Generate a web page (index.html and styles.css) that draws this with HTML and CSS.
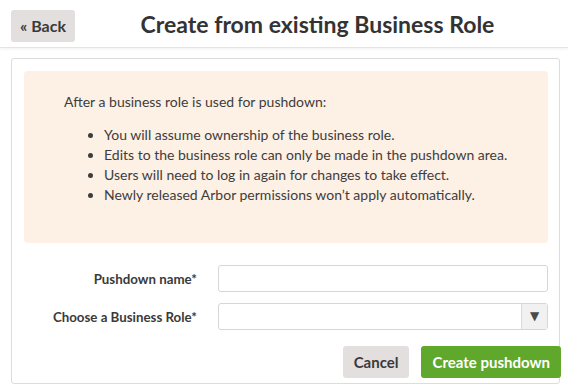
FILE: index.html
```html
<!DOCTYPE html>
<html lang="en">
<head>
  <meta charset="UTF-8">
  <meta name="viewport" content="width=device-width, initial-scale=1.0">
  <title>Create from existing Business Role</title>
  <link rel="stylesheet" href="styles.css">
</head>
<body>
  <header class="topbar">
    <button class="btn btn-back">« Back</button>
    <h1 class="title">Create from existing Business Role</h1>
  </header>

  <div class="panel">
    <div class="notice">
      <p>After a business role is used for pushdown:</p>
      <ul>
        <li>You will assume ownership of the business role.</li>
        <li>Edits to the business role can only be made in the pushdown area.</li>
        <li>Users will need to log in again for changes to take effect.</li>
        <li>Newly released Arbor permissions won’t apply automatically.</li>
      </ul>
    </div>

    <form class="form">
      <div class="row">
        <label class="label" for="name">Pushdown name*</label>
        <input class="input" id="name" type="text">
      </div>
      <div class="row">
        <label class="label" for="role">Choose a Business Role*</label>
        <div class="select" id="role">
          <span class="select-arrow">▼</span>
        </div>
      </div>
      <div class="actions">
        <button type="button" class="btn btn-cancel">Cancel</button>
        <button type="button" class="btn btn-primary">Create pushdown</button>
      </div>
    </form>
  </div>
</body>
</html>
```

FILE: styles.css
```css
body {
  font-family: Lato, "Open Sans", sans-serif;
  margin: 0;
  padding: 0;
  color: #3d3d3d;
  background: #fff;
}

.topbar {
  display: flex;
  align-items: center;
  height: 48px;
  padding: 0 8px 0 11px;
  border-bottom: 1px solid #e4e4e4;
  box-shadow: 0 1px 3px rgba(0, 0, 0, 0.06);
  box-sizing: border-box;
}

.title {
  flex: 1;
  margin: 0;
  text-align: center;
  font-size: 23px;
  font-weight: bold;
  color: #333;
}

.btn {
  font-family: inherit;
  font-weight: bold;
  border: none;
  border-radius: 3px;
  cursor: pointer;
}

.btn-back {
  width: 64px;
  height: 32px;
  margin-top: 4px;
  padding: 0;
  font-size: 16px;
  background-color: #e2dfde;
  color: #3a3a3a;
}

.panel {
  margin: 10px 8px 0 11px;
  padding: 12px 11px 12px 12px;
  border: 1px solid #dcdcdc;
  border-radius: 3px;
  box-sizing: border-box;
  height: 326px;
}

.notice {
  background-color: #fdf0e4;
  border-radius: 4px;
  padding: 21px 20px 18px 40px;
  height: 172px;
  box-sizing: border-box;
  font-size: 14px;
  line-height: 20px;
}

.notice p {
  margin: 0 0 13px;
}

.notice ul {
  margin: 0;
  padding-left: 40px;
}

.form {
  margin-top: 22px;
}

.row {
  display: flex;
  align-items: center;
  margin-bottom: 11px;
}

.label {
  width: 173px;
  text-align: right;
  padding-right: 21px;
  font-size: 13.3px;
  font-weight: bold;
  color: #3a3a3a;
}

.input,
.select {
  flex: 1;
  height: 27px;
  border: 1px solid #d6d6d6;
  border-radius: 3px;
  box-sizing: border-box;
  background: #fff;
}

.select {
  display: flex;
  justify-content: flex-end;
}

.select-arrow {
  width: 25px;
  background-color: #f1f1f1;
  border-left: 1px solid #dadada;
  font-family: "DejaVu Sans", sans-serif;
  font-size: 12px;
  color: #4a4a4a;
  text-align: center;
  line-height: 25px;
}

.actions {
  display: flex;
  justify-content: flex-end;
  gap: 12px;
  margin-right: -13px;
  margin-top: 16px;
}

.actions .btn {
  height: 32px;
  font-size: 15px;
  padding: 0 11px;
}

.btn-cancel {
  background-color: #e2dfde;
  color: #3a3a3a;
}

.btn-primary {
  background-color: #5fa82b;
  color: #fff;
}
```
